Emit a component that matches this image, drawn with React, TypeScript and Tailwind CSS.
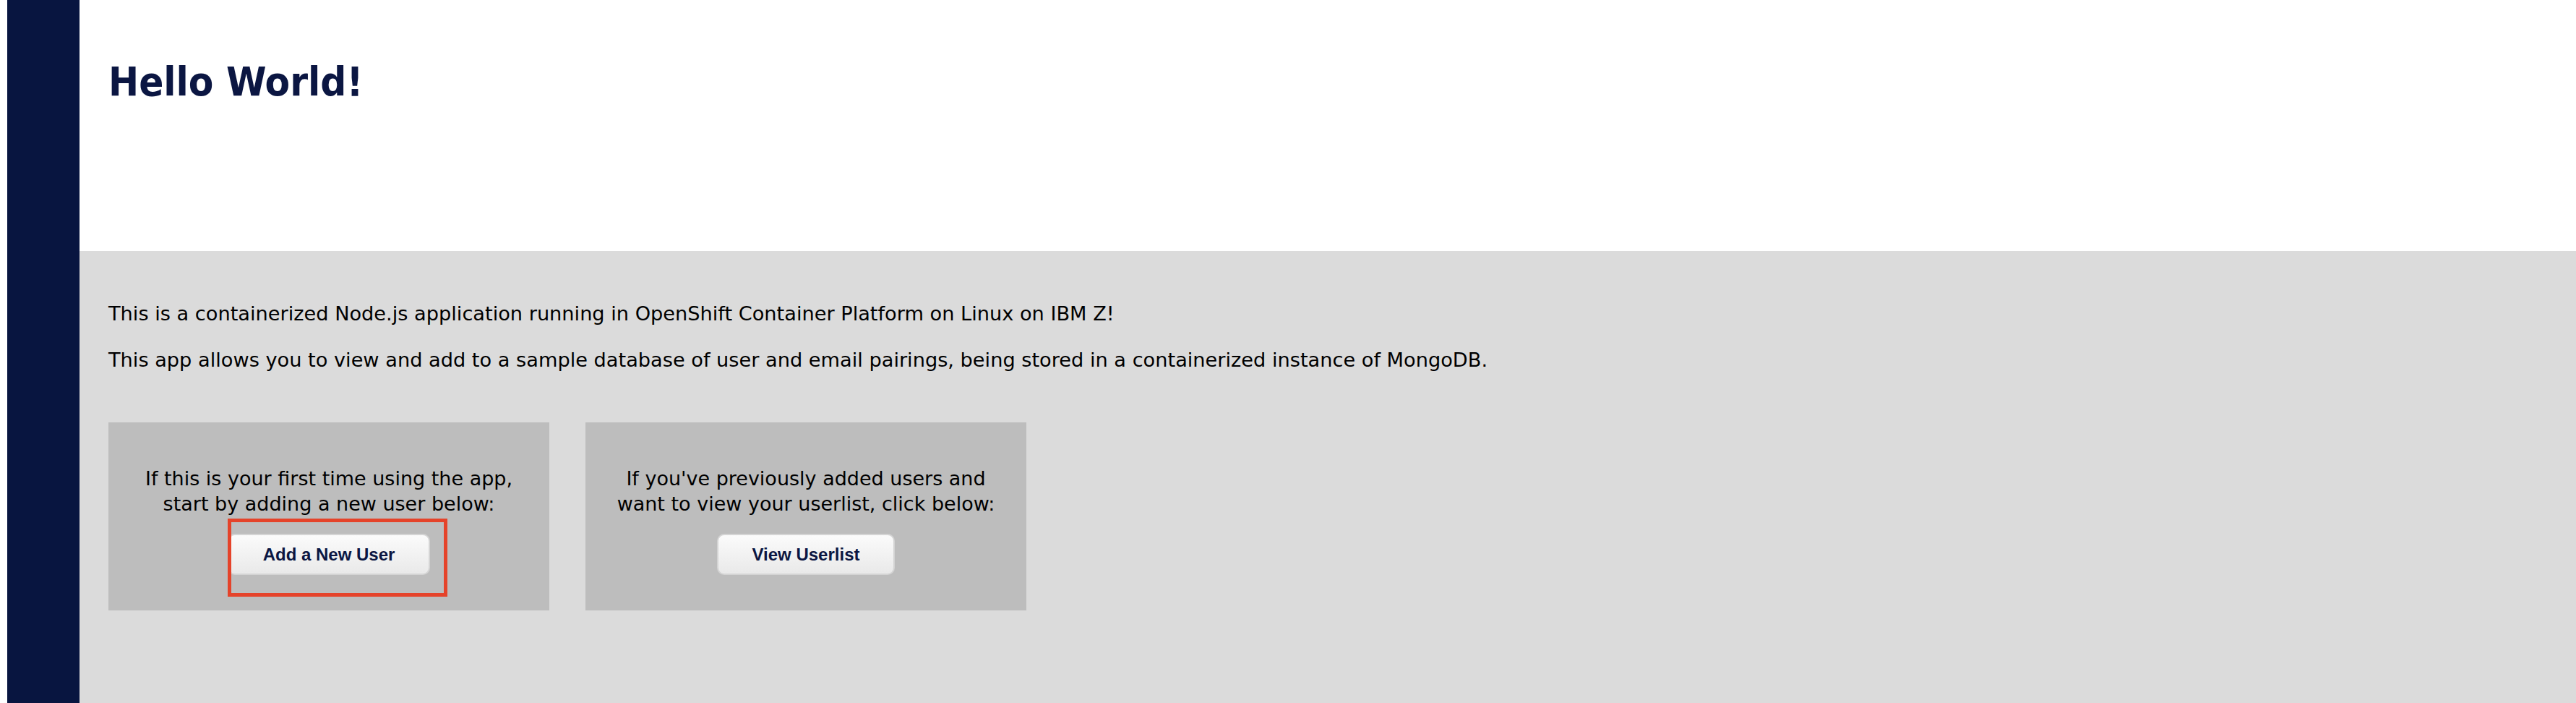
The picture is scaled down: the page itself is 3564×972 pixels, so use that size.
import React from "react";

const bodyFont = { fontFamily: '"DejaVu Sans", "Noto Sans", sans-serif' };

function Box({ lines, label, marked }: { lines: [string, string]; label: string; marked?: boolean }) {
  return (
    <div className="flex h-[260px] w-[610px] flex-col items-center bg-[#bdbdbd] pt-[60px]">
      <p className="text-center text-[27px] leading-[35px] text-black">
        {lines[0]}
        <br />
        {lines[1]}
      </p>
      <div className="relative mt-[24px]">
        <button
          className="h-[57px] rounded-[10px] border-2 border-[#d4d4d4] bg-linear-to-b from-[#fbfbfb] to-[#e9e9e9] px-[47px] text-[24px] font-bold text-[#0b1642]"
          style={{ fontFamily: '"Liberation Sans", Arial, sans-serif' }}
        >
          {label}
        </button>
        {marked && (
          <span className="pointer-events-none absolute -top-[21px] -right-[24px] -bottom-[30px] left-0 border-[5px] border-[#e5432a]" />
        )}
      </div>
    </div>
  );
}

export default function App() {
  return (
    <div className="flex h-[972px] bg-white pl-[10px]" style={bodyFont}>
      <aside className="w-[100px] shrink-0 bg-[#081540]" />
      <main className="flex flex-1 flex-col">
        <header className="h-[347px] bg-white px-[40px] pt-[85px]">
          <h1
            className="text-[56px] leading-none font-bold text-[#0b1642]"
            style={{ fontFamily: '"DejaVu Sans Condensed", "DejaVu Sans", sans-serif', fontStretch: "condensed" }}
          >
            Hello World!
          </h1>
        </header>
        <section className="flex-1 bg-[#dbdbdb] px-[40px] pt-[69px]">
          <p className="text-[27.2px] leading-[35px] text-black">
            This is a containerized Node.js application running in OpenShift Container Platform on Linux on IBM Z!
          </p>
          <p className="mt-[29px] text-[27.2px] leading-[35px] text-black">
            This app allows you to view and add to a sample database of user and email pairings, being stored in a containerized instance of MongoDB.
          </p>
          <div className="mt-[69px] flex gap-[50px]">
            <Box
              lines={["If this is your first time using the app,", "start by adding a new user below:"]}
              label="Add a New User"
              marked
            />
            <Box
              lines={["If you've previously added users and", "want to view your userlist, click below:"]}
              label="View Userlist"
            />
          </div>
        </section>
      </main>
    </div>
  );
}
